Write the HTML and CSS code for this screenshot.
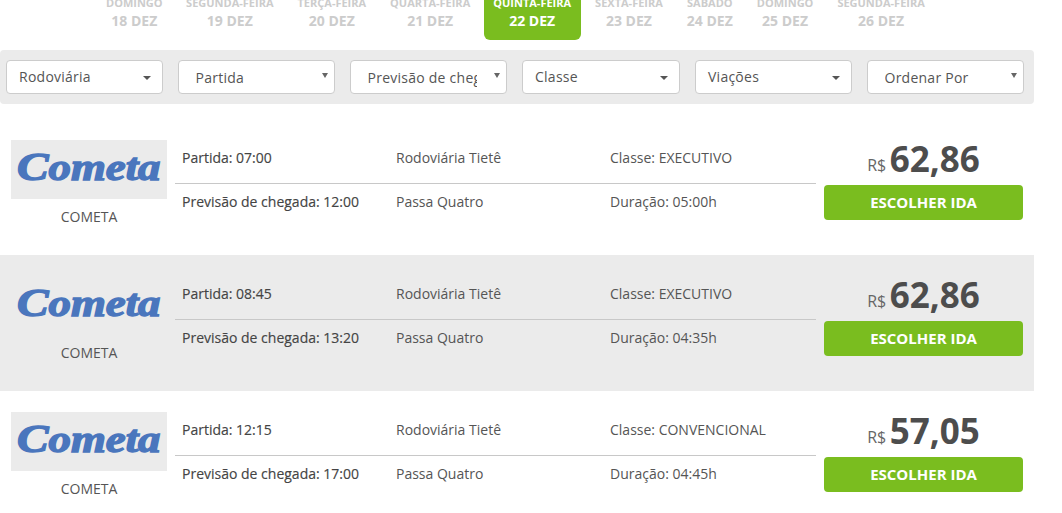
FILE: index.html
```html
<!DOCTYPE html>
<html lang="pt-BR">
<head>
<meta charset="utf-8">
<title>Escolher ida</title>
<link rel="stylesheet" href="styles.css">
</head>
<body>
<nav class="days">
  <a class="day"><span class="day-name">Domingo</span><span class="day-date">18 DEZ</span></a>
  <a class="day"><span class="day-name">Segunda-feira</span><span class="day-date">19 DEZ</span></a>
  <a class="day"><span class="day-name">Terça-feira</span><span class="day-date">20 DEZ</span></a>
  <a class="day"><span class="day-name">Quarta-feira</span><span class="day-date">21 DEZ</span></a>
  <a class="day day-active"><span class="day-name">Quinta-feira</span><span class="day-date">22 DEZ</span></a>
  <a class="day"><span class="day-name">Sexta-feira</span><span class="day-date">23 DEZ</span></a>
  <a class="day"><span class="day-name">Sábado</span><span class="day-date">24 DEZ</span></a>
  <a class="day"><span class="day-name">Domingo</span><span class="day-date">25 DEZ</span></a>
  <a class="day"><span class="day-name">Segunda-feira</span><span class="day-date">26 DEZ</span></a>
</nav>

<form class="filters">
  <button type="button" class="drop">Rodoviária<i class="caret"></i></button>
  <label class="native-wrap"><select class="native"><option>Partida</option></select></label>
  <label class="native-wrap"><select class="native"><option>Previsão de chegada</option></select></label>
  <button type="button" class="drop">Classe<i class="caret"></i></button>
  <button type="button" class="drop">Viações<i class="caret"></i></button>
  <label class="native-wrap"><select class="native"><option>Ordenar Por</option></select></label>
</form>

<main class="results">
  <article class="trip">
    <div class="carrier">
      <svg class="logo" viewBox="0 0 156 59" role="img" aria-label="Cometa"><text class="logo-text" transform="translate(6 40) scale(1.18 1)"><tspan class="logo-cap">C</tspan><tspan>ometa</tspan></text></svg>
      <div class="carrier-name">COMETA</div>
    </div>
    <div class="info">
      <div class="info-row info-top"><span class="strong">Partida: 07:00</span><span>Rodoviária Tietê</span><span>Classe: EXECUTIVO</span></div>
      <div class="info-row info-bottom"><span class="strong">Previsão de chegada: 12:00</span><span>Passa Quatro</span><span>Duração: 05:00h</span></div>
    </div>
    <div class="buy">
      <div class="price"><span class="currency">R$</span> <span class="amount">62,86</span></div>
      <button type="button" class="choose">ESCOLHER IDA</button>
    </div>
  </article>

  <article class="trip trip-alt">
    <div class="carrier">
      <svg class="logo" viewBox="0 0 156 59" role="img" aria-label="Cometa"><text class="logo-text" transform="translate(6 40) scale(1.18 1)"><tspan class="logo-cap">C</tspan><tspan>ometa</tspan></text></svg>
      <div class="carrier-name">COMETA</div>
    </div>
    <div class="info">
      <div class="info-row info-top"><span class="strong">Partida: 08:45</span><span>Rodoviária Tietê</span><span>Classe: EXECUTIVO</span></div>
      <div class="info-row info-bottom"><span class="strong">Previsão de chegada: 13:20</span><span>Passa Quatro</span><span>Duração: 04:35h</span></div>
    </div>
    <div class="buy">
      <div class="price"><span class="currency">R$</span> <span class="amount">62,86</span></div>
      <button type="button" class="choose">ESCOLHER IDA</button>
    </div>
  </article>

  <article class="trip">
    <div class="carrier">
      <svg class="logo" viewBox="0 0 156 59" role="img" aria-label="Cometa"><text class="logo-text" transform="translate(6 40) scale(1.18 1)"><tspan class="logo-cap">C</tspan><tspan>ometa</tspan></text></svg>
      <div class="carrier-name">COMETA</div>
    </div>
    <div class="info">
      <div class="info-row info-top"><span class="strong">Partida: 12:15</span><span>Rodoviária Tietê</span><span>Classe: CONVENCIONAL</span></div>
      <div class="info-row info-bottom"><span class="strong">Previsão de chegada: 17:00</span><span>Passa Quatro</span><span>Duração: 04:45h</span></div>
    </div>
    <div class="buy">
      <div class="price"><span class="currency">R$</span> <span class="amount">57,05</span></div>
      <button type="button" class="choose">ESCOLHER IDA</button>
    </div>
  </article>
</main>
</body>
</html>
```
FILE: styles.css
```css
* { box-sizing: border-box; }
html, body { height: 513px; overflow: hidden; }
body {
  margin: 0;
  background: #fff;
  color: #555;
  font-family: "Open Sans", "Liberation Sans", sans-serif;
  font-size: 14px;
}

.days {
  display: flex;
  margin: -6px 0 10px;
  padding-left: 94px;
  height: 46px;
}
.day {
  display: flex;
  flex-direction: column;
  align-items: center;
  padding: 0 12px;
  color: #ccc;
  font-weight: 700;
}
.day:nth-child(2) { margin-left: -.5px; }
.day-name { font-size: 11px; line-height: 18px; text-transform: uppercase; }
.day-date { font-size: 14px; line-height: 17px; }
.day-active {
  margin: 0 2.5px 0 1.5px;
  padding: 0 9.5px;
  background: #7abd1f;
  color: #fff;
  border-radius: 0 0 6px 6px;
}

.filters {
  display: grid;
  grid-template-columns: 157px 157px 157px 158px 157px 157px;
  column-gap: 15px;
  width: 1034px;
  height: 54px;
  padding: 10px 0 10px 6px;
  background: #ebebeb;
  border-radius: 4px;
}
.drop, .native {
  height: 34px;
  border: 1px solid #ccc;
  border-radius: 4px;
  background: #fff;
  color: #555;
  font-family: inherit;
  font-size: 14px;
  letter-spacing: .25px;
}
.drop {
  position: relative;
  padding: 0 12px 2px;
  text-align: left;
}
.caret {
  position: absolute;
  right: 11px;
  top: 15px;
  border-top: 4px solid #555;
  border-left: 4px solid transparent;
  border-right: 4px solid transparent;
}
.native-wrap { position: relative; display: block; }
.native-wrap::after {
  content: "";
  position: absolute;
  right: 7px;
  top: 13px;
  border-top: 5px solid #666;
  border-left: 3px solid transparent;
  border-right: 3px solid transparent;
  pointer-events: none;
}
.native {
  appearance: none;
  display: block;
  width: 100%;
  padding: 1px 29px 0 16.5px;
}

.results { margin-top: 15px; width: 1034px; }
.trip {
  display: flex;
  height: 136px;
  padding: 21px 11px 0;
  column-gap: 8px;
}
.trip-alt { background: #ebebeb; }

.carrier { width: 156px; flex: none; text-align: center; }
.logo { display: block; width: 156px; height: 59px; background: #ebebeb; }
.logo-text {
  font-family: "Liberation Serif", "DejaVu Serif", serif;
  font-style: italic;
  font-weight: 700;
  font-size: 38px;
  fill: #4a76bd;
  stroke: #4a76bd;
  stroke-width: 1.4px;
}
.logo-cap { font-size: 40px; }
.carrier-name { margin-top: 8px; line-height: 20px; color: #555; }

.info { width: 641px; flex: none; margin-top: -1px; }
.info-row {
  display: grid;
  grid-template-columns: 214px 214px 1fr;
  padding: 0 7px;
  line-height: 20px;
}
.info-top { padding-top: 9px; padding-bottom: 15px; border-bottom: 1px solid #c8c8c8; }
.info-bottom { padding-top: 8px; }
.strong { color: #444; -webkit-text-stroke: .15px #444; }

.buy { width: 199px; flex: none; }
.price {
  height: 45px;
  text-align: center;
  white-space: nowrap;
  line-height: 37px;
}
.currency { font-size: 16px; color: #666; vertical-align: 1px; }
.amount { font-size: 35px; font-weight: 700; color: #4d4d4d; }
.choose {
  display: block;
  width: 100%;
  height: 35px;
  padding: 0 0 2px;
  border: 0;
  border-radius: 4px;
  background: #7abd1f;
  color: #fff;
  font-family: inherit;
  font-size: 15px;
  font-weight: 700;
}
```
